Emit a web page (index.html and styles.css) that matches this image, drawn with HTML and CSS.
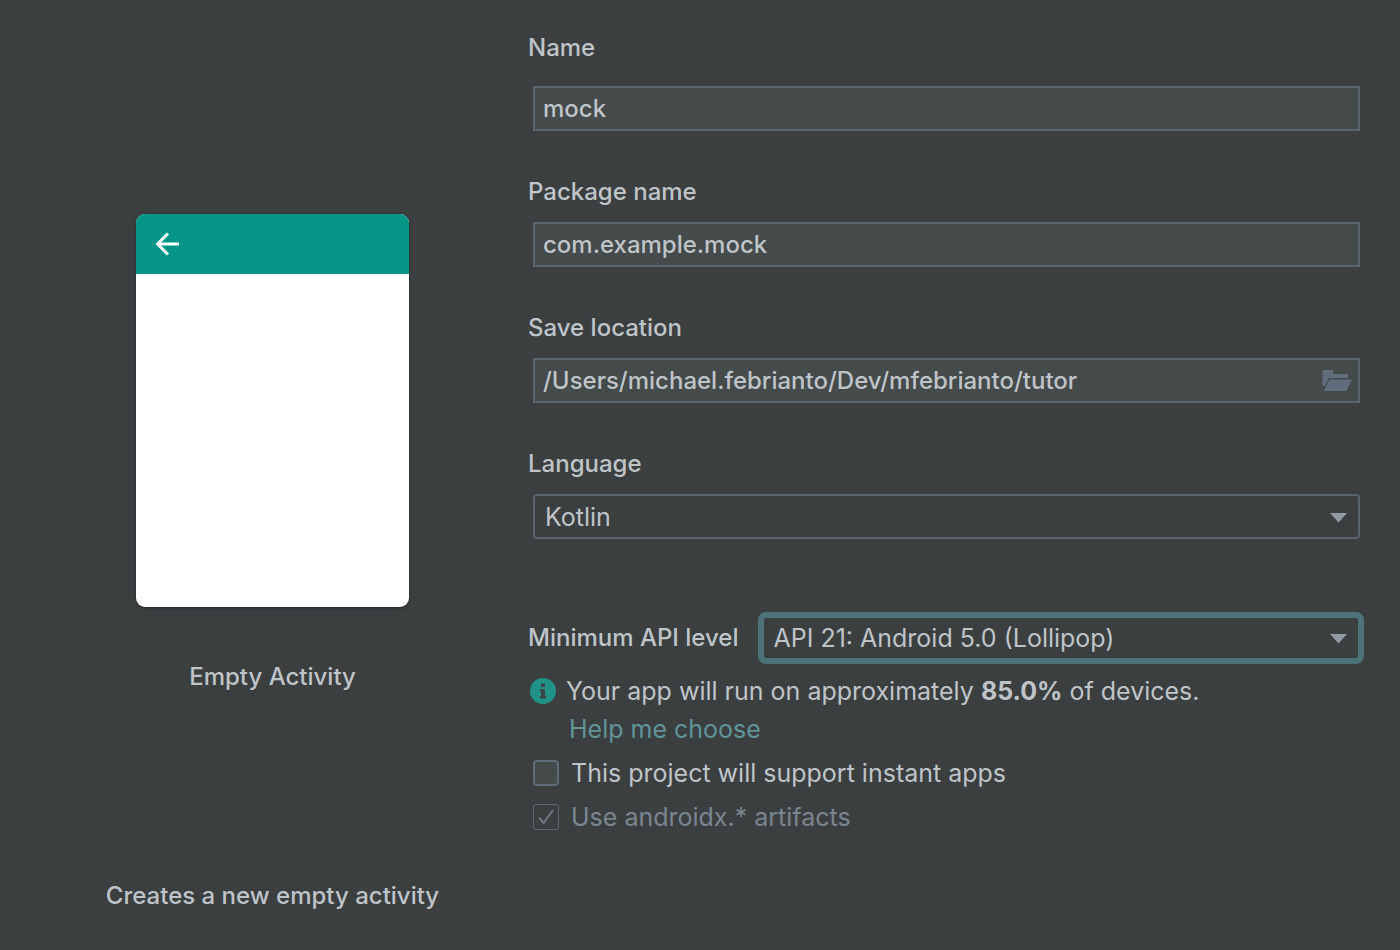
FILE: index.html
```html
<!DOCTYPE html>
<html lang="en">
<head>
<meta charset="utf-8">
<meta name="viewport" content="width=device-width, initial-scale=1">
<title>Configure your project</title>
<link rel="stylesheet" href="styles.css">
</head>
<body>
<main class="wizard">
  <section class="template">
    <div class="phone">
      <div class="phone-bar">
        <svg class="back" viewBox="0 0 24 24" aria-hidden="true"><path d="M23 12H2M12 1.5L1.5 12L12 22.500"/></svg>
      </div>
    </div>
    <p class="template-name">Empty Activity</p>
    <p class="template-note">Creates a new empty activity</p>
  </section>

  <form class="form">
    <div class="field field-first">
      <label for="name">Name</label>
      <input class="control text" id="name" type="text" value="mock">
    </div>
    <div class="field">
      <label for="package">Package name</label>
      <input class="control text" id="package" type="text" value="com.example.mock">
    </div>
    <div class="field">
      <label for="location">Save location</label>
      <div class="control-wrap">
        <input class="control text" id="location" type="text" value="/Users/michael.febrianto/Dev/mfebrianto/tutor">
        <button class="browse" type="button" aria-label="Browse">
          <svg viewBox="0 0 30 22" aria-hidden="true"><path d="M0.500 0H11V4H26V8H7L2.500 16H0.500ZM7.500 9.500H30L24.500 21H1.500Z"/></svg>
        </button>
      </div>
    </div>
    <div class="field">
      <label for="language">Language</label>
      <div class="control-wrap">
        <select class="control select" id="language"><option>Kotlin</option></select>
        <svg class="caret" viewBox="0 0 17 10" aria-hidden="true"><path d="M0 0H17L8.500 9.500Z"/></svg>
      </div>
    </div>

    <div class="api">
      <label for="api">Minimum API level</label>
      <div class="control-wrap focus">
        <select class="control select" id="api"><option>API 21: Android 5.0 (Lollipop)</option></select>
        <svg class="caret" viewBox="0 0 17 10" aria-hidden="true"><path d="M0 0H17L8.500 9.500Z"/></svg>
      </div>
    </div>

    <div class="info">
      <svg class="info-icon" viewBox="0 0 26 26" aria-hidden="true"><circle class="disc" cx="13" cy="13" r="13"/><path class="mark" d="M11 5.500H15V9H11ZM10 11H15V18H16V20.500H10V18H11V13.500H10Z"/></svg>
      <p>Your app will run on approximately <b>85.0%</b> of devices.</p>
      <a class="help" href="#">Help me choose</a>
    </div>

    <label class="check">
      <input type="checkbox">
      <span>This project will support instant apps</span>
    </label>
    <label class="check check-off">
      <span class="box">
        <input type="checkbox" checked disabled>
        <svg class="tick" viewBox="0 0 26 26" aria-hidden="true"><path d="M6 13.500L10.500 19L20 6"/></svg>
      </span>
      <span>Use androidx.* artifacts</span>
    </label>
  </form>
</main>
</body>
</html>
```
FILE: styles.css
```css
* { box-sizing: border-box; }

body {
  margin: 0;
  background: #3c3f40;
  color: #bfc4c9;
  font: 25px/30px Inter, "Liberation Sans", sans-serif;
}

p { margin: 0; }

.wizard {
  display: grid;
  grid-template-columns: 528px minmax(0, 1fr);
  min-height: 100vh;
}

.template {
  display: flex;
  flex-direction: column;
  align-items: center;
  padding: 214px 0 0 17px;
}

.template,
.field label,
.api label,
.control.text {
  font-size: 24px;
  font-weight: 500;
}

.phone {
  width: 273px;
  height: 393px;
  border-radius: 9px;
  overflow: hidden;
  background: #fff;
  box-shadow: 0 1px 3px #26292b;
}

.phone-bar {
  display: flex;
  align-items: center;
  height: 60px;
  padding-left: 20px;
  background: #059587;
}

.back {
  width: 24px;
  height: 24px;
  fill: none;
  stroke: #fff;
  stroke-width: 3;
}

.template-name { margin-top: 55px; }
.template-note { margin-top: 189px; }

.form { padding: 33px 40px 0 0; }

.field {
  display: flex;
  flex-direction: column;
  gap: 15px;
  margin-bottom: 46px;
}

.field-first { gap: 23px; }

.field .control,
.field .control-wrap { margin-left: 5px; }
.field .control-wrap .control { margin-left: 0; }

.control-wrap {
  position: relative;
  display: flex;
}

.control {
  flex: 1;
  min-width: 0;
  min-height: 45px;
  margin: 0;
  border: 2px solid #586470;
  color: inherit;
  font: inherit;
  outline: none;
}

.text {
  padding: 0 8px;
  background: #454a4a;
}

.select {
  appearance: none;
  padding: 0 10px;
  border-radius: 4px;
  background: #3c3f40;
}

.browse {
  position: absolute;
  top: 12px;
  right: 8px;
  display: flex;
  padding: 0;
  border: 0;
  background: none;
}

.browse svg {
  width: 30px;
  height: 22px;
  fill: #5f6d7c;
}

.caret {
  position: absolute;
  top: 19px;
  right: 13px;
  width: 17px;
  height: 10px;
  fill: #929ba6;
  pointer-events: none;
}

.api {
  display: flex;
  align-items: center;
  gap: 20px;
  margin: 73px -4px 0 0;
}

.api .control-wrap { flex: 1; }

.focus .control {
  min-height: 52px;
  border: 6px solid #4b7379;
  border-radius: 8px;
  padding: 0 9px;
}

.focus .caret {
  top: 22px;
  right: 17px;
}

.info {
  display: grid;
  grid-template-columns: 26px 1fr;
  column-gap: 10px;
  row-gap: 8px;
  align-items: center;
  margin-top: 12px;
  padding-left: 2px;
}

.info-icon {
  width: 26px;
  height: 26px;
}

.disc { fill: #209288; }
.mark { fill: #3c4546; }

.help {
  grid-column: 2;
  justify-self: start;
  padding-left: 3px;
  color: #5f9499;
  text-decoration: none;
}

.check {
  display: flex;
  align-items: center;
  gap: 12px;
  margin-top: 14px;
  padding-left: 5px;
}

.check input {
  appearance: none;
  display: block;
  width: 26px;
  height: 26px;
  margin: 0;
  border: 2px solid #5d6b79;
  border-radius: 4px;
  background: #454a4a;
}

.check-off { color: #798591; }

.check-off input {
  border: 1px solid #5d6874;
  border-radius: 3px;
  background: none;
}

.box { position: relative; }

.tick {
  position: absolute;
  inset: 0;
  fill: none;
  stroke: #687786;
  stroke-width: 2;
}
```
